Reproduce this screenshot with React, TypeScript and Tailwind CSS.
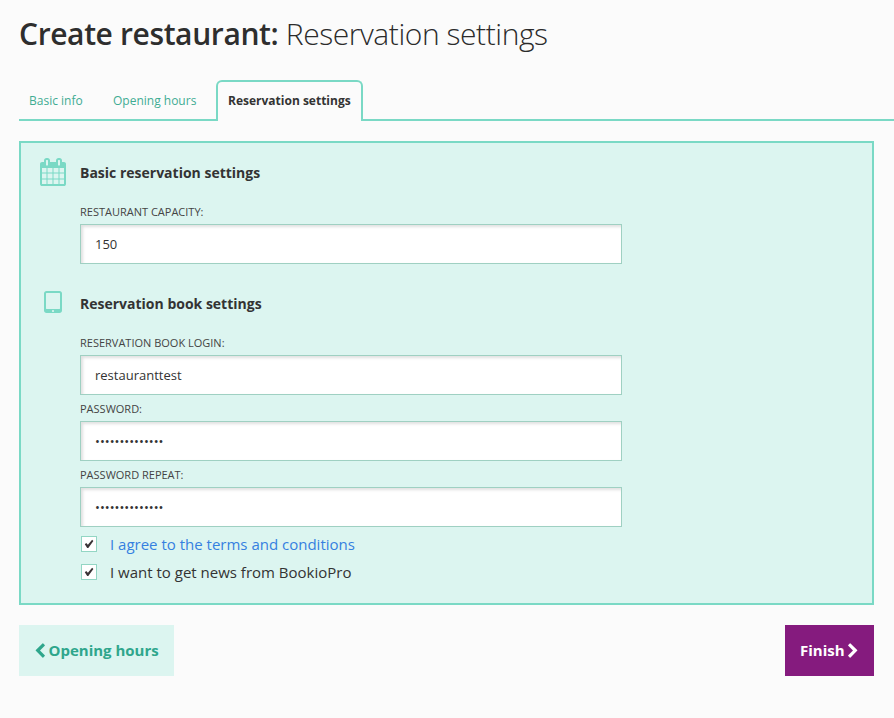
import React from "react";

const CALENDAR =
  "M192 1664h288v-288h-288v288zm352 0h320v-288h-320v288zm-352-352h288v-320h-288v320zm352 0h320v-320h-320v320zm-352-384h288v-288h-288v288zm736 736h320v-288h-320v288zm-384-736h320v-288h-320v288zm768 736h288v-288h-288v288zm-384-352h320v-320h-320v320zm-352-864v-288q0-13-9.5-22.5t-22.5-9.5h-64q-13 0-22.5 9.5t-9.5 22.5v288q0 13 9.5 22.5t22.5 9.5h64q13 0 22.5-9.5t9.5-22.5zm736 864h288v-320h-288v320zm-384-384h320v-288h-320v288zm384 0h288v-288h-288v288zm32-480v-288q0-13-9.5-22.5t-22.5-9.5h-64q-13 0-22.5 9.5t-9.5 22.5v288q0 13 9.5 22.5t22.5 9.5h64q13 0 22.5-9.5t9.5-22.5zm384-64v1280q0 52-38 90t-90 38h-1408q-52 0-90-38t-38-90v-1280q0-52 38-90t90-38h128v-96q0-66 47-113t113-47h64q66 0 113 47t47 113v96h384v-96q0-66 47-113t113-47h64q66 0 113 47t47 113v96h128q52 0 90 38t38 90z";
const TABLET =
  "M960 1408q0-26-19-45t-45-19-45 19-19 45 19 45 45 19 45-19 19-45zm384-160v-960q0-13-9.5-22.5t-22.5-9.5h-832q-13 0-22.5 9.5t-9.5 22.5v960q0 13 9.5 22.5t22.5 9.5h832q13 0 22.5-9.5t9.5-22.5zm128-960v1088q0 66-47 113t-113 47h-832q-66 0-113-47t-47-113v-1088q0-66 47-113t113-47h832q66 0 113 47t47 113z";
const CHEVRON_LEFT =
  "M1427 301l-531 531 531 531q19 19 19 45t-19 45l-166 166q-19 19-45 19t-45-19l-742-742q-19-19-19-45t19-45l742-742q19-19 45-19t45 19l166 166q19 19 19 45t-19 45z";
const CHEVRON_RIGHT =
  "M1363 877l-742 742q-19 19-45 19t-45-19l-166-166q-19-19-19-45t19-45l531-531-531-531q-19-19-19-45t19-45l166-166q19-19 45-19t45 19l742 742q19 19 19 45t-19 45z";

function Icon({ d, className }: { d: string; className: string }) {
  return (
    <svg viewBox="0 0 1792 1792" fill="currentColor" className={className}>
      <path d={d} />
    </svg>
  );
}

function SectionTitle({ icon, children }: { icon: string; children: React.ReactNode }) {
  return (
    <div className="flex h-7 items-center">
      <Icon d={icon} className="size-7 shrink-0 text-[#7ad9c5]" />
      <h2 className="ml-[13px] pt-px text-sm leading-5 font-bold">{children}</h2>
    </div>
  );
}

function Field({ label, value, password }: { label: string; value: string; password?: boolean }) {
  return (
    <label className="block h-[66px] w-[542px]">
      <span className="block h-[21px] text-[11px] leading-[18px] text-[#444] uppercase">{label}</span>
      <input
        type={password ? "password" : "text"}
        defaultValue={value}
        className="block h-10 w-full border border-[#9fd0c2] bg-white px-3.5 text-[13px] text-[#333] shadow-[inset_2px_2px_3px_rgba(0,0,0,0.12)] outline-none"
      />
    </label>
  );
}

function Check({ children, link }: { children: React.ReactNode; link?: boolean }) {
  return (
    <div className="flex h-7 items-center">
      <span className="ml-px flex size-4 justify-center border border-[#93d6c4] bg-white pt-[2px]">
        <svg viewBox="0 0 10 10" className="size-2.5" fill="#3a3336">
          <path d="M0.8 5.3 2.2 4 3.9 5.8 8.1 0.8 9.4 1.9 4.3 8.9 3.2 8.9Z" />
        </svg>
      </span>
      <span className={link ? "ml-[13px] text-[15px] leading-5 text-[#3580e0]" : "ml-[13px] text-[15px] leading-5"}>
        {children}
      </span>
    </div>
  );
}

export default function App() {
  return (
    <div className="h-[718px] overflow-hidden bg-[#fbfbfb] pl-[19px] font-['Open_Sans',sans-serif] text-[#333]">
      <h1 className="h-20 pt-[14px] text-[30px] leading-10 font-light tracking-[-0.44px] whitespace-nowrap text-[#2b2b2b]">
        <strong className="font-semibold tracking-[-0.38px] text-[#2e2e2e]">Create restaurant:</strong> Reservation settings
      </h1>

      <nav className="flex h-[41px] text-xs leading-4">
        <div className="flex w-[197px] border-b-2 border-[#7ad9c5] pt-[13px] text-[#3fac93]">
          <a className="ml-2.5 w-[84px]">Basic info</a>
          <a>Opening hours</a>
        </div>
        <div className="w-[147px] rounded-t-md border-2 border-b-0 border-[#7ad9c5] pt-[11px] pl-2.5 font-bold whitespace-nowrap">
          Reservation settings
        </div>
        <div className="flex-1 border-b-2 border-[#7ad9c5]" />
      </nav>

      <main className="mt-5 mr-5 h-[464px] border-2 border-[#7ad9c5] bg-[#dcf5f0] pt-[15px] pl-[18px]">
        <SectionTitle icon={CALENDAR}>Basic reservation settings</SectionTitle>
        <div className="mt-[17px] ml-[41px]">
          <Field label="Restaurant capacity:" value="150" />
        </div>
        <div className="mt-5">
          <SectionTitle icon={TABLET}>Reservation book settings</SectionTitle>
        </div>
        <div className="mt-[17px] ml-[41px]">
          <Field label="Reservation book login:" value="restauranttest" />
          <Field label="Password:" value="restauranttest" password />
          <Field label="Password repeat:" value="restauranttest" password />
          <div className="-mt-0.5">
            <Check link>I agree to the terms and conditions</Check>
            <Check>I want to get news from BookioPro</Check>
          </div>
        </div>
      </main>

      <footer className="mt-5 mr-5 flex justify-between text-[15px] font-bold">
        <button className="flex h-[51px] w-[155px] items-center bg-[#dcf5f0] pl-[12.5px] text-[#2fa68c]">
          <Icon d={CHEVRON_LEFT} className="size-4" />
          <span className="ml-px">Opening hours</span>
        </button>
        <button className="flex h-[51px] w-[89px] items-center bg-[#851b7e] pl-[15px] text-white">
          <span>Finish</span>
          <Icon d={CHEVRON_RIGHT} className="ml-[0.5px] size-4" />
        </button>
      </footer>
    </div>
  );
}
